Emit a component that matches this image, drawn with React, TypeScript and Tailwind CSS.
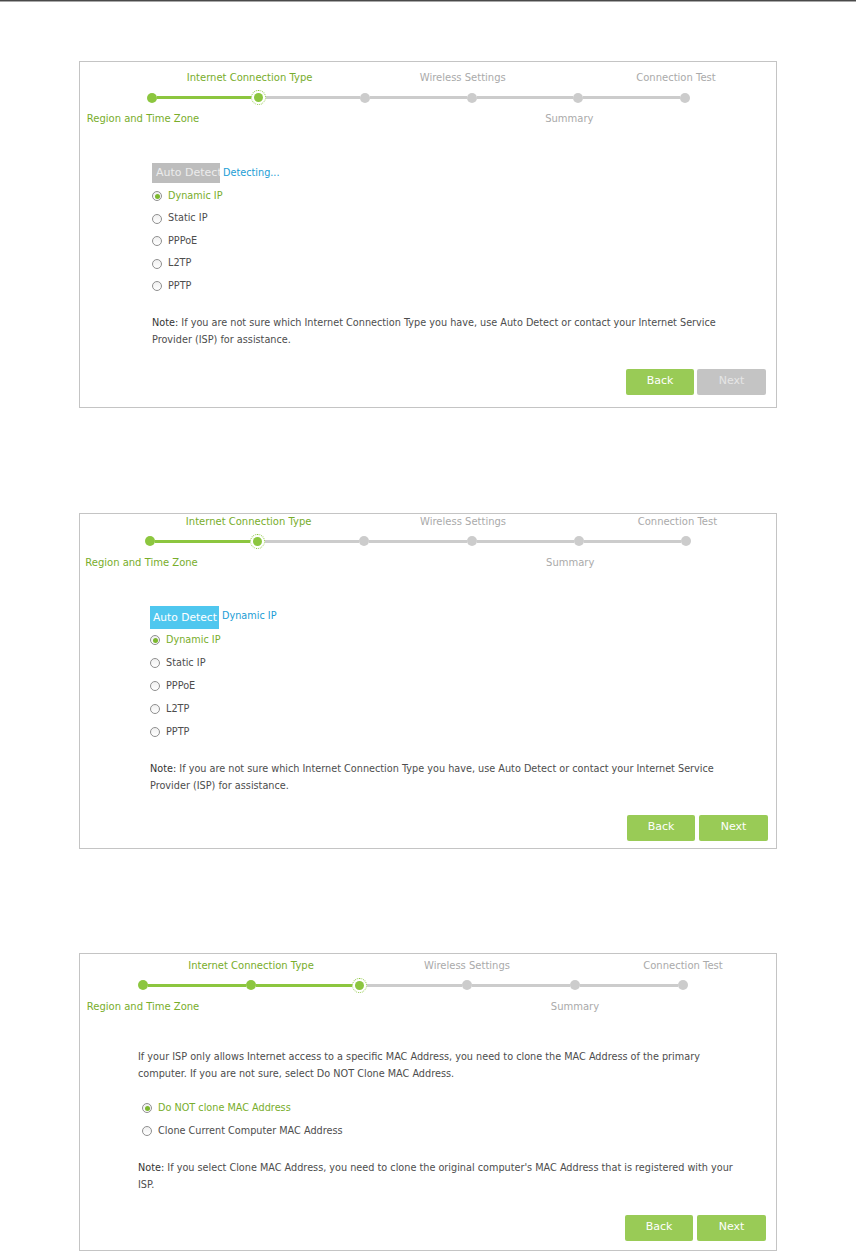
import type { ReactNode } from 'react'

const FONT = { fontFamily: '"DejaVu Sans", Verdana, sans-serif' }

const topLabels = ['', 'Internet Connection Type', '', 'Wireless Settings', '', 'Connection Test']
const bottomLabels = ['Region and Time Zone', '', '', '', 'Summary', '']

function Dot({ state }: { state: 'done' | 'current' | 'todo' }) {
  if (state === 'current') {
    return (
      <span className="flex h-[15px] w-[15px] shrink-0 items-center justify-center rounded-full border border-dotted border-[#8cc63f] bg-white">
        <span className="h-[9px] w-[9px] rounded-full bg-[#8cc63f]" />
      </span>
    )
  }
  return (
    <span
      className={`h-[10px] w-[10px] shrink-0 rounded-full ${state === 'done' ? 'bg-[#8cc63f]' : 'bg-[#cccccc]'}`}
    />
  )
}

function Stepper({
  current,
  cols,
  labelMl,
  dotMl,
  topPad,
}: {
  current: number
  cols: string
  labelMl: string
  dotMl: string
  topPad: string
}) {
  return (
    <div className={topPad}>
      <div className={`grid h-[12px] text-[10px] leading-[12px] ${cols} ${labelMl}`}>
        {topLabels.map((l, i) => (
          <div key={i} className={`flex justify-center whitespace-nowrap ${i <= current ? 'text-[#78ad2b]' : 'text-[#aaaaaa]'}`}>
            {l}
          </div>
        ))}
      </div>
      <div className={`mt-[6px] grid h-[15px] ${cols} ${dotMl}`}>
        {topLabels.map((_, i) => (
          <div key={i} className="flex items-center">
            <span
              className={`h-[3px] flex-1 ${i === 0 ? 'bg-transparent' : i <= current ? 'bg-[#8cc63f]' : 'bg-[#cccccc]'}`}
            />
            <Dot state={i < current ? 'done' : i === current ? 'current' : 'todo'} />
            <span
              className={`h-[3px] flex-1 ${i === 5 ? 'bg-transparent' : i < current ? 'bg-[#8cc63f]' : 'bg-[#cccccc]'}`}
            />
          </div>
        ))}
      </div>
      <div className={`mt-[8px] grid h-[12px] text-[10px] leading-[12px] ${cols} ${labelMl}`}>
        {bottomLabels.map((l, i) => (
          <div key={i} className={`flex justify-center whitespace-nowrap ${i <= current ? 'text-[#78ad2b]' : 'text-[#aaaaaa]'}`}>
            {l}
          </div>
        ))}
      </div>
    </div>
  )
}

function Radio({ label, checked, rowH }: { label: string; checked?: boolean; rowH: string }) {
  return (
    <div className={`flex items-center gap-[6px] text-[9.7px] ${rowH} ${checked ? 'text-[#78ad2b]' : 'text-[#4d4d4d]'}`}>
      <span className="flex h-[10px] w-[10px] items-center justify-center rounded-full border border-[#8f8f8f] bg-gradient-to-b from-[#f0f0f0] to-white">
        {checked && <span className="h-[5px] w-[5px] rounded-full bg-[#7cb82f]" />}
      </span>
      {label}
    </div>
  )
}

function Buttons({ nextEnabled, gap, wrap }: { nextEnabled: boolean; gap: string; wrap: string }) {
  return (
    <div className={`flex justify-end ${gap} ${wrap}`}>
      <button className="h-[26px] w-[68px] rounded-[2px] bg-[#99cb56] text-[11px] text-white">Back</button>
      <button
        className={`h-[26px] w-[69px] rounded-[2px] text-[11px] ${nextEnabled ? 'bg-[#99cb56] text-white' : 'bg-[#c4c4c4] text-[#e6e6e6]'}`}
      >
        Next
      </button>
    </div>
  )
}

function Panel({ children, className }: { children: ReactNode; className: string }) {
  return <div className={`ml-[79px] w-[698px] border border-[#c4c4c4] bg-white ${className}`}>{children}</div>
}

const types = ['Dynamic IP', 'Static IP', 'PPPoE', 'L2TP', 'PPTP']

function Note({ children }: { children: ReactNode }) {
  return (
    <p className="text-[9.7px] leading-[17px] text-[#4d4d4d]">
      <span className="text-[#333333]">Note:</span> {children}
    </p>
  )
}

export default function App() {
  return (
    <div className="min-h-[1253px] bg-white" style={FONT}>
      <div className="h-px bg-[#4a4a4a]" />
      <div className="h-px bg-[#a8a8a8]" />

      {/* step 2: detecting */}
      <Panel className="mt-[59px]">
        <Stepper
          current={1}
          cols="grid-cols-[repeat(6,106.6px)]"
          labelMl="ml-[9.7px]"
          dotMl="ml-[18.7px]"
          topPad="pt-[10px]"
        />
        <div className="mt-[38px] pl-[72px]">
          <div className="flex items-center">
            <span className="block h-[20px] w-[68px] overflow-hidden whitespace-nowrap bg-[#bdbdbd] pl-[4px] text-[11px] leading-[20px] text-[#ececec]">
              Auto Detect
            </span>
            <span className="ml-[3px] text-[9.7px] text-[#1b9dd5]">Detecting...</span>
          </div>
          <div className="mt-[2px]">
            {types.map((t, i) => (
              <Radio key={t} label={t} checked={i === 0} rowH="h-[22.5px]" />
            ))}
          </div>
          <div className="mt-[16px] w-[585px]">
            <Note>
              If you are not sure which Internet Connection Type you have, use Auto Detect or contact your Internet Service
              Provider (ISP) for assistance.
            </Note>
          </div>
        </div>
        <Buttons nextEnabled={false} gap="gap-[3px]" wrap="mt-[21px] pr-[10px] pb-[12px]" />
      </Panel>

      {/* step 2: detected */}
      <Panel className="mt-[105px]">
        <Stepper
          current={1}
          cols="grid-cols-[repeat(6,107.2px)]"
          labelMl="ml-[7.9px]"
          dotMl="ml-[16.4px]"
          topPad="pt-[2px]"
        />
        <div className="mt-[37px] pl-[70px]">
          <div className="flex items-start">
            <span className="block h-[23px] w-[69px] overflow-hidden whitespace-nowrap bg-[#4fc7ef] pl-[3px] text-[10.7px] leading-[24px] text-white">
              Auto Detect
            </span>
            <span className="ml-[3px] mt-[3px] text-[9.7px] text-[#1b9dd5]">Dynamic IP</span>
          </div>
          <div>
            {types.map((t, i) => (
              <Radio key={t} label={t} checked={i === 0} rowH="h-[23px]" />
            ))}
          </div>
          <div className="mt-[16px] w-[590px]">
            <Note>
              If you are not sure which Internet Connection Type you have, use Auto Detect or contact your Internet Service
              Provider (ISP) for assistance.
            </Note>
          </div>
        </div>
        <Buttons nextEnabled gap="gap-[4px]" wrap="mt-[21px] pr-[8px] pb-[7px]" />
      </Panel>

      {/* MAC clone */}
      <Panel className="mt-[104px]">
        <Stepper
          current={2}
          cols="grid-cols-[repeat(6,108px)]"
          labelMl="ml-[9px]"
          dotMl="ml-[9px]"
          topPad="pt-[6px]"
        />
        <div className="mt-[35px] pl-[58px]">
          <p className="w-[590px] text-[9.7px] leading-[17px] text-[#4d4d4d]">
            If your ISP only allows Internet access to a specific MAC Address, you need to clone the MAC Address of the primary
            computer. If you are not sure, select Do NOT Clone MAC Address.
          </p>
          <div className="mt-[15px] pl-[4px]">
            <Radio label="Do NOT clone MAC Address" checked rowH="h-[23px]" />
            <Radio label="Clone Current Computer MAC Address" rowH="h-[23px]" />
          </div>
          <div className="mt-[16px] w-[605px]">
            <Note>
              If you select Clone MAC Address, you need to clone the original computer's MAC Address that is registered with
              your ISP.
            </Note>
          </div>
        </div>
        <Buttons nextEnabled gap="gap-[4px]" wrap="mt-[22px] pr-[10px] pb-[9px]" />
      </Panel>
    </div>
  )
}
